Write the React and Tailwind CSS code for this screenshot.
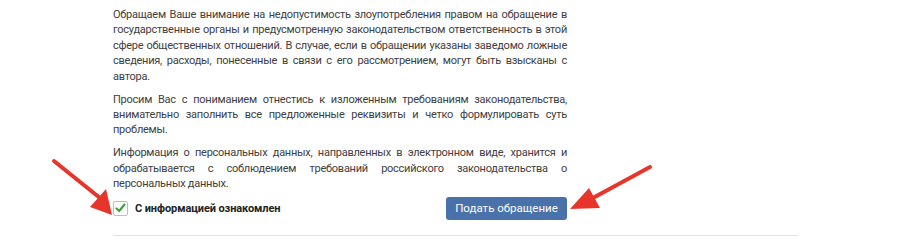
import React, { useState } from "react";

const paragraphs = [
  [
    "Обращаем Ваше внимание на недопустимость злоупотребления правом на обращение в",
    "государственные органы и предусмотренную законодательством ответственность в этой",
    "сфере общественных отношений. В случае, если в обращении указаны заведомо ложные",
    "сведения, расходы, понесенные в связи с его рассмотрением, могут быть взысканы с",
    "автора.",
  ],
  [
    "Просим Вас с пониманием отнестись к изложенным требованиям законодательства,",
    "внимательно заполнить все предложенные реквизиты и четко формулировать суть",
    "проблемы.",
  ],
  [
    "Информация о персональных данных, направленных в электронном виде, хранится и",
    "обрабатывается с соблюдением требований российского законодательства о",
    "персональных данных.",
  ],
];

export default function App() {
  const [agree, setAgree] = useState(true);

  return (
    <div className="relative w-[900px] h-[244px] bg-white overflow-hidden font-['Roboto','Noto_Sans',sans-serif] text-[11px] leading-[15.4px] tracking-[-0.25px] text-[#404040]">
      <div className="ml-[113px] w-[454px] pt-[7px]">
        {paragraphs.map((lines, i) => (
          <p key={i} className="mb-[7.5px]">
            {lines.map((line, j) => (
              <span
                key={j}
                className={
                  j < lines.length - 1
                    ? "block whitespace-nowrap text-justify [text-align-last:justify]"
                    : "block whitespace-nowrap"
                }
              >
                {line}
              </span>
            ))}
          </p>
        ))}
      </div>

      <div className="ml-[113px] w-[684px] flex items-center -mt-[2px]">
        <label className="flex items-center gap-[7px] cursor-pointer">
          <button
            onClick={() => setAgree(!agree)}
            className="w-[15px] h-[15px] border border-[#bdbdbd] rounded-[2px] bg-white flex items-center justify-center"
          >
            {agree && (
              <svg width="11" height="10" viewBox="0 0 11 10">
                <path d="M1.5 5.5 L4.2 8 L9.5 1.5" stroke="#3aa53a" strokeWidth="2.2" fill="none" strokeLinecap="round" strokeLinejoin="round" />
              </svg>
            )}
          </button>
          <span className="font-bold text-[11px] tracking-[-0.1px] text-[#222]">С информацией ознакомлен</span>
        </label>
        <button className="ml-auto mr-[230px] w-[121px] h-[23px] rounded-[3px] bg-[#4a72aa] text-white text-[11.5px] tracking-normal leading-none">
          Подать обращение
        </button>
      </div>

      <div className="ml-[113px] w-[685px] mt-[15px] border-t border-[#e3e3e3]" />

      <svg className="absolute left-[50px] top-[157px] w-[70px] h-[60px]" viewBox="0 0 70 60" fill="none">
        <path d="M4 4 L50 41" stroke="#e8352b" strokeWidth="4" strokeLinecap="round" />
        <polygon points="62,58 40,50 56,32" fill="#e8352b" />
      </svg>
      <svg className="absolute left-[565px] top-[163px] w-[90px] h-[55px]" viewBox="0 0 90 55" fill="none">
        <path d="M85 4 L26 36" stroke="#e8352b" strokeWidth="4" strokeLinecap="round" />
        <polygon points="5,46 24,25 35,45" fill="#e8352b" />
      </svg>
    </div>
  );
}
